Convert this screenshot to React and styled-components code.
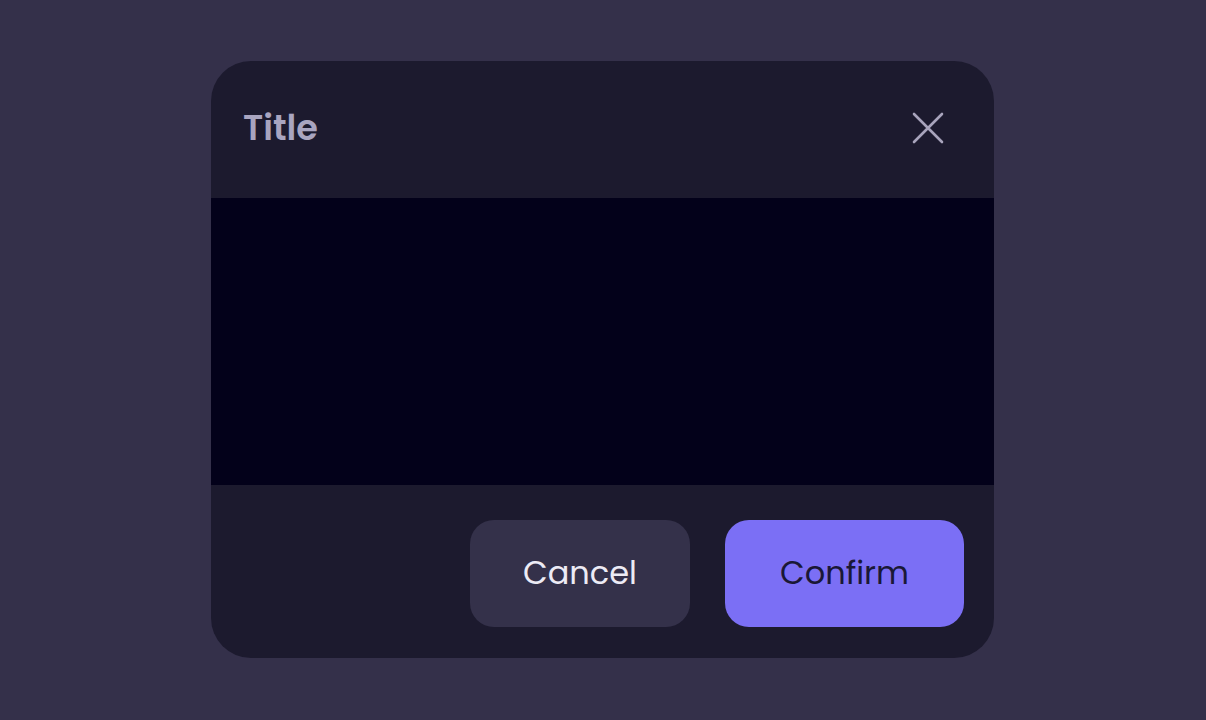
import React from "react";
import styled, { createGlobalStyle } from "styled-components";

const GlobalStyle = createGlobalStyle`
  html, body {
    margin: 0;
    padding: 0;
    background-color: #34304a;
    font-family: "Poppins", "Inter", "Noto Sans", sans-serif;
  }
`;

const Page = styled.div`
  width: 1206px;
  height: 720px;
  display: flex;
  justify-content: center;
  padding: 61px 1px 0 0;
  box-sizing: border-box;
`;

const Dialog = styled.div`
  width: 783px;
  height: 597px;
  display: flex;
  flex-direction: column;
  background-color: #1c1a2e;
  border-radius: 40px;
  overflow: hidden;
`;

const Header = styled.div`
  height: 137px;
  display: flex;
  align-items: center;
  justify-content: space-between;
  padding: 0 32px;
  box-sizing: border-box;
`;

const Title = styled.h2`
  margin: -4px 0 0;
  font-size: 35px;
  font-weight: 600;
  color: #a9a5c0;
`;

const CloseButton = styled.button`
  width: 68px;
  height: 68px;
  display: flex;
  align-items: center;
  justify-content: center;
  background: transparent;
  border: none;
  padding: 0;
  margin-top: -3px;
  cursor: pointer;
`;

const Body = styled.div`
  height: 287px;
  background-color: #03011a;
`;

const Footer = styled.div`
  flex: 1;
  display: flex;
  justify-content: flex-end;
  align-items: flex-start;
  gap: 35px;
  padding: 35px 30px 0 0;
  box-sizing: border-box;
`;

const Button = styled.button`
  width: ${(p) => p.$width}px;
  height: 107px;
  border: none;
  border-radius: 24px;
  font-family: inherit;
  font-size: 32px;
  font-weight: 400;
  cursor: pointer;
  padding: 0 0 2px;
  background-color: ${(p) => (p.$primary ? "#7b6ff5" : "#34314a")};
  color: ${(p) => (p.$primary ? "#1a1836" : "#ecebf5")};
`;

function CloseIcon() {
  return (
    <svg width="32" height="32" viewBox="0 0 32 32" fill="none">
      <path
        d="M2 2L30 30M30 2L2 30"
        stroke="#a8a4bc"
        strokeWidth="2.6"
        strokeLinecap="round"
      />
    </svg>
  );
}

export default function App() {
  return (
    <>
      <GlobalStyle />
      <Page>
        <Dialog>
          <Header>
            <Title>Title</Title>
            <CloseButton aria-label="Close">
              <CloseIcon />
            </CloseButton>
          </Header>
          <Body />
          <Footer>
            <Button $width={220}>Cancel</Button>
            <Button $width={239} $primary>
              Confirm
            </Button>
          </Footer>
        </Dialog>
      </Page>
    </>
  );
}
